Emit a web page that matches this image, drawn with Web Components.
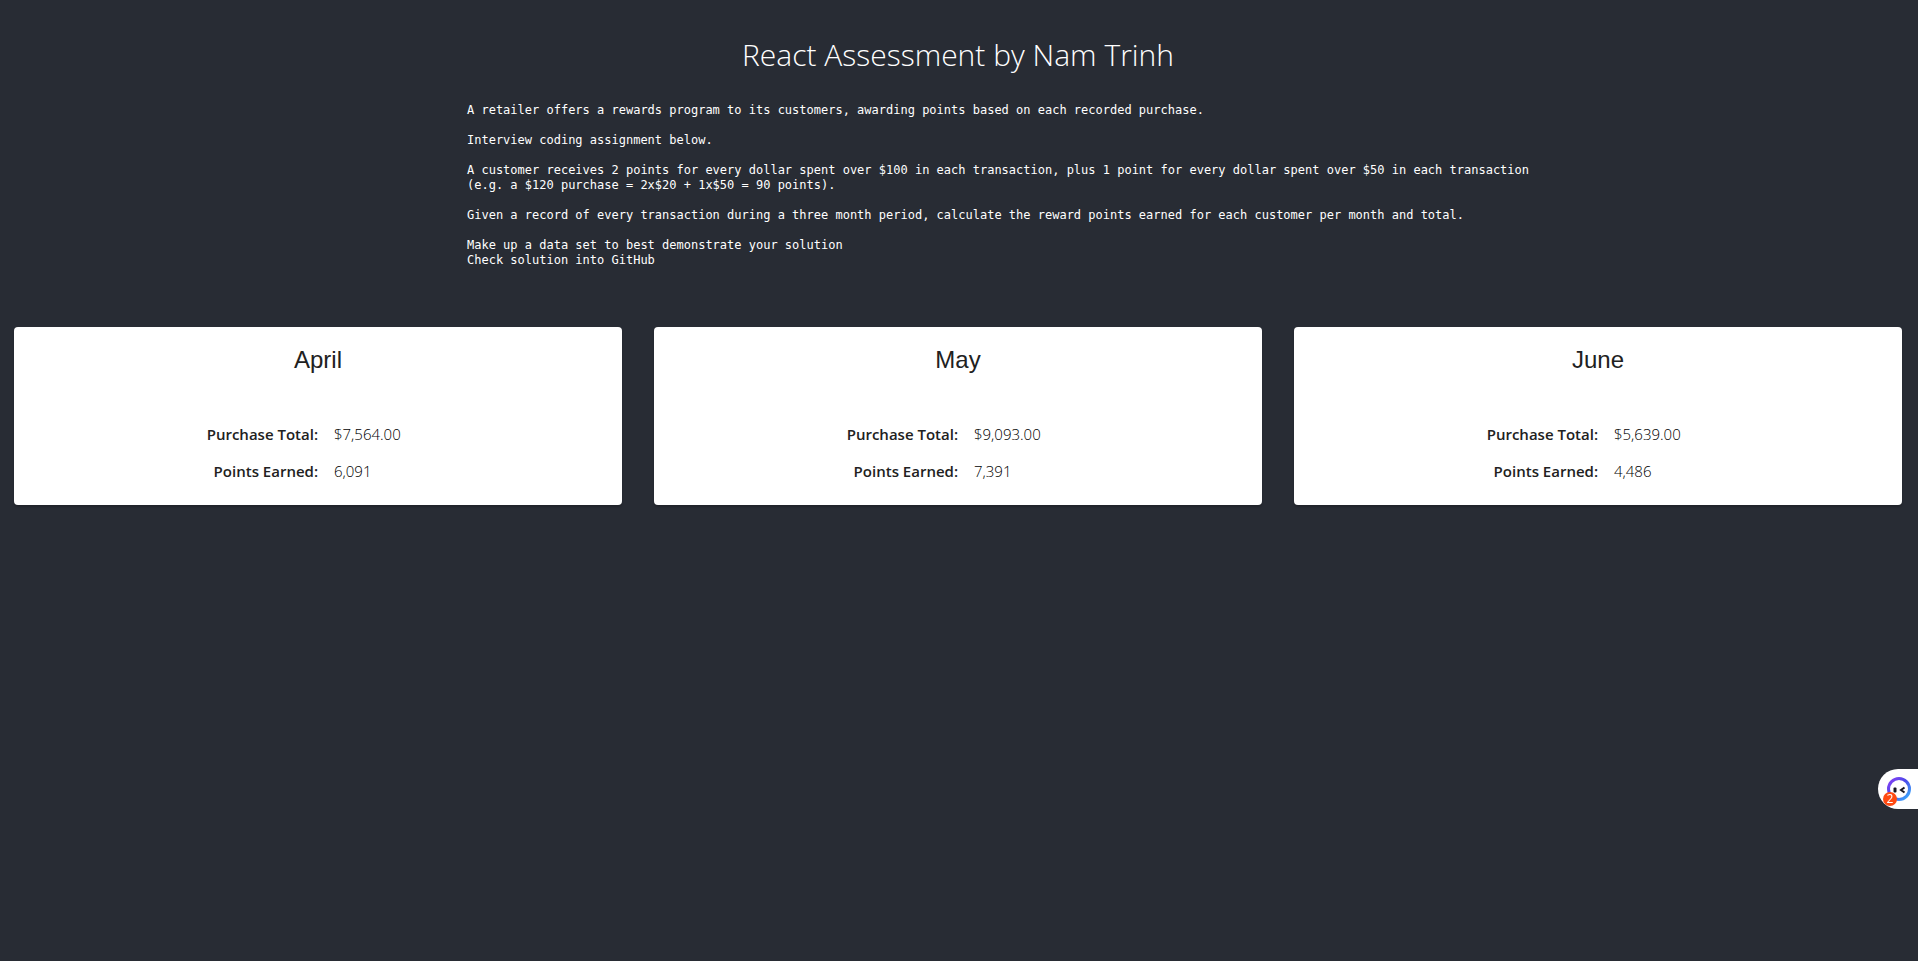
<!DOCTYPE html>
<html lang="en">
<head>
<meta charset="utf-8">
<meta name="viewport" content="width=device-width, initial-scale=1">
<title>React Assessment by Nam Trinh</title>
<style>
  body { margin: 0; min-height: 100vh; background: #282c34; color: #fff; font-family: "Open Sans", "Noto Sans", sans-serif; }
</style>
</head>
<body>
<rewards-app>
  <page-intro heading="React Assessment by Nam Trinh">A retailer offers a rewards program to its customers, awarding points based on each recorded purchase.

Interview coding assignment below.

A customer receives 2 points for every dollar spent over $100 in each transaction, plus 1 point for every dollar spent over $50 in each transaction
(e.g. a $120 purchase = 2x$20 + 1x$50 = 90 points).

Given a record of every transaction during a three month period, calculate the reward points earned for each customer per month and total.

Make up a data set to best demonstrate your solution
Check solution into GitHub</page-intro>
  <month-card slot="months" month="April" total="$7,564.00" points="6,091"></month-card>
  <month-card slot="months" month="May" total="$9,093.00" points="7,391"></month-card>
  <month-card slot="months" month="June" total="$5,639.00" points="4,486"></month-card>
</rewards-app>
<assistant-bubble count="2"></assistant-bubble>

<template id="app-template">
  <style>
    :host { display: block; padding: 32px 16px 0 14px; }
    section { display: grid; grid-template-columns: repeat(auto-fit, minmax(320px, 1fr)); gap: 32px; margin-top: 59px; }
  </style>
  <main>
    <slot></slot>
    <section aria-label="Monthly rewards"><slot name="months"></slot></section>
  </main>
</template>

<template id="intro-template">
  <style>
    :host { display: block; }
    h1 { margin: 0; font-size: 30px; line-height: 45px; font-weight: 300; text-align: center; }
    pre { box-sizing: border-box; width: fit-content; max-width: 100%; margin: 26px auto 0; padding-left: 80px; font: 12px/15px "DejaVu Sans Mono", "Liberation Mono", monospace; white-space: pre-wrap; }
  </style>
  <h1></h1>
  <pre><slot></slot></pre>
</template>

<template id="card-template">
  <style>
    :host { display: block; box-sizing: border-box; padding: 17px 0 15px 16px; background: #fff; color: #212121; border-radius: 4px; box-shadow: 0 2px 2px rgba(0, 0, 0, .2); }
    h2 { margin: 0 16px 40px 0; font: 400 24px/32px "Liberation Sans", Arial, sans-serif; text-align: center; }
    dl { display: grid; grid-template-columns: 1fr 1fr; column-gap: 16px; margin: 0; font-size: 15px; line-height: 37px; }
    dt { text-align: right; font-weight: 600; }
    dd { margin: 0; color: #000; font-weight: 300; }
  </style>
  <h2></h2>
  <dl>
    <dt>Purchase Total:</dt><dd class="total"></dd>
    <dt>Points Earned:</dt><dd class="points"></dd>
  </dl>
</template>

<template id="bubble-template">
  <style>
    :host { position: fixed; right: 0; bottom: 152px; display: block; }
    button { position: relative; display: block; width: 40px; height: 40px; padding: 0; border: 0; border-radius: 20px 0 0 20px; background: #fff; }
    svg { position: absolute; left: 8px; top: 8px; }
    span { position: absolute; left: 5px; top: 23px; width: 14px; height: 14px; border-radius: 50%; background: #ff4a12; color: #fff; font: 12px/14px "Open Sans", sans-serif; text-align: center; }
  </style>
  <button type="button" aria-label="Open assistant">
    <svg width="26" height="26" viewBox="0 0 26 26" aria-hidden="true">
      <defs><linearGradient id="ring" x1="0" y1="0" x2="1" y2="1"><stop offset="0" stop-color="#8a3ff5"/><stop offset=".45" stop-color="#4b49e8"/><stop offset="1" stop-color="#39b5ff"/></linearGradient></defs>
      <circle cx="13" cy="12" r="10.5" fill="none" stroke="url(#ring)" stroke-width="3"/>
      <rect x="7.5" y="10.5" width="3" height="5" rx="1" fill="#15151f"/>
      <path d="M18.5 10.5l-3.5 2.5 3.5 2.5" fill="none" stroke="#15151f" stroke-width="2"/>
    </svg>
    <span></span>
  </button>
</template>

<script>
  class TemplateElement extends HTMLElement {
    connectedCallback() {
      if (this.shadowRoot) return;
      const template = document.getElementById(this.constructor.template);
      this.attachShadow({ mode: "open" }).append(template.content.cloneNode(true));
      this.fill();
    }
    put(selector, attribute) {
      this.shadowRoot.querySelector(selector).textContent = this.getAttribute(attribute);
    }
    fill() {}
  }
  class RewardsApp extends TemplateElement { static template = "app-template"; }
  class PageIntro extends TemplateElement {
    static template = "intro-template";
    fill() { this.put("h1", "heading"); }
  }
  class MonthCard extends TemplateElement {
    static template = "card-template";
    fill() { this.put("h2", "month"); this.put(".total", "total"); this.put(".points", "points"); }
  }
  class AssistantBubble extends TemplateElement {
    static template = "bubble-template";
    fill() { this.put("span", "count"); }
  }
  customElements.define("rewards-app", RewardsApp);
  customElements.define("page-intro", PageIntro);
  customElements.define("month-card", MonthCard);
  customElements.define("assistant-bubble", AssistantBubble);
</script>
</body>
</html>
